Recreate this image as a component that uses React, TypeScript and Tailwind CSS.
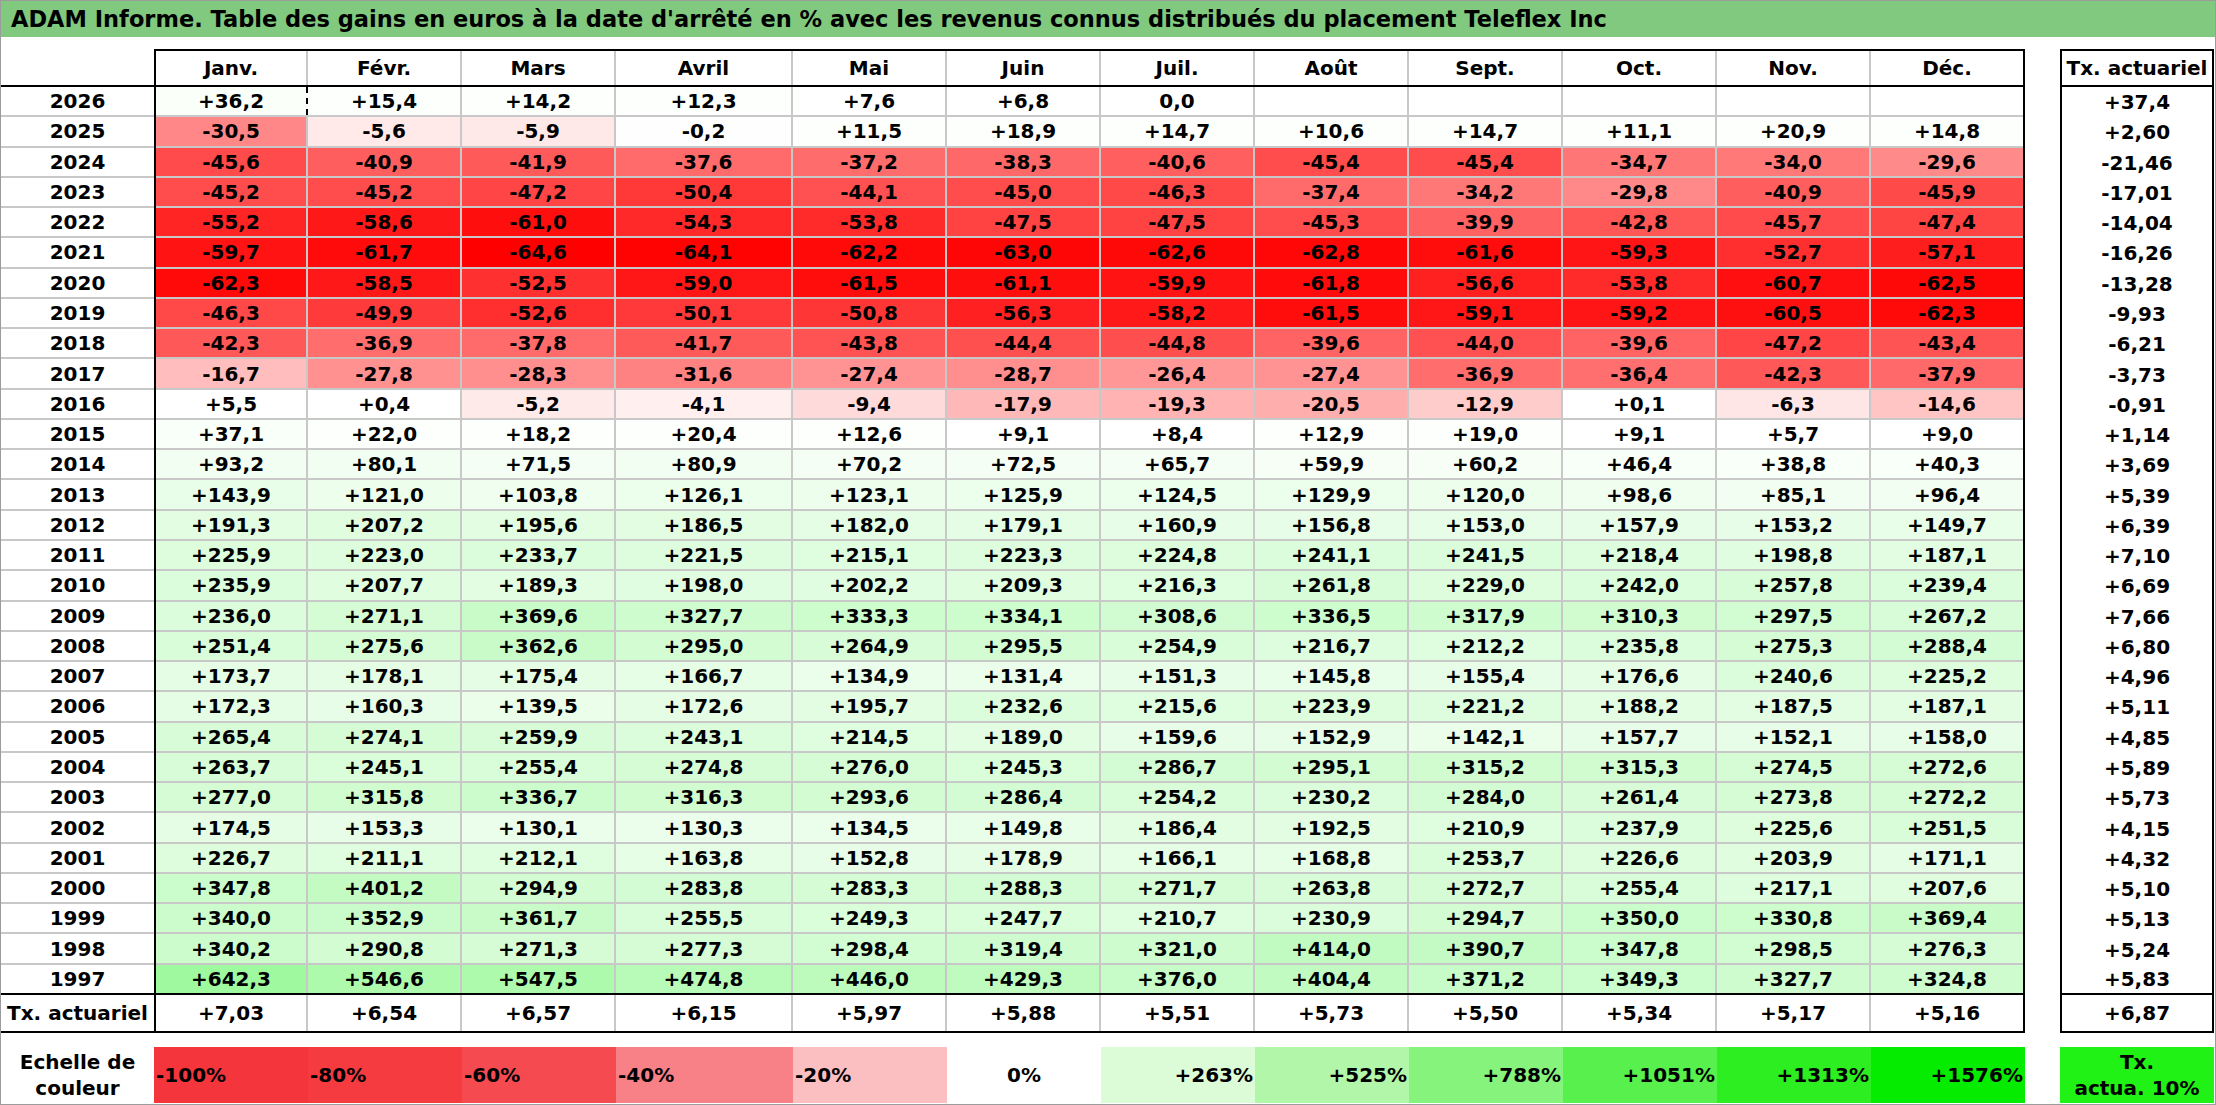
import React from "react";

const months = ["Janv.", "Févr.", "Mars", "Avril", "Mai", "Juin", "Juil.", "Août", "Sept.", "Oct.", "Nov.", "Déc."];

const rows: [string, string, string][] = [
  ["2026", "+36,2 +15,4 +14,2 +12,3 +7,6 +6,8 0,0 _ _ _ _ _", "+37,4"],
  ["2025", "-30,5 -5,6 -5,9 -0,2 +11,5 +18,9 +14,7 +10,6 +14,7 +11,1 +20,9 +14,8", "+2,60"],
  ["2024", "-45,6 -40,9 -41,9 -37,6 -37,2 -38,3 -40,6 -45,4 -45,4 -34,7 -34,0 -29,6", "-21,46"],
  ["2023", "-45,2 -45,2 -47,2 -50,4 -44,1 -45,0 -46,3 -37,4 -34,2 -29,8 -40,9 -45,9", "-17,01"],
  ["2022", "-55,2 -58,6 -61,0 -54,3 -53,8 -47,5 -47,5 -45,3 -39,9 -42,8 -45,7 -47,4", "-14,04"],
  ["2021", "-59,7 -61,7 -64,6 -64,1 -62,2 -63,0 -62,6 -62,8 -61,6 -59,3 -52,7 -57,1", "-16,26"],
  ["2020", "-62,3 -58,5 -52,5 -59,0 -61,5 -61,1 -59,9 -61,8 -56,6 -53,8 -60,7 -62,5", "-13,28"],
  ["2019", "-46,3 -49,9 -52,6 -50,1 -50,8 -56,3 -58,2 -61,5 -59,1 -59,2 -60,5 -62,3", "-9,93"],
  ["2018", "-42,3 -36,9 -37,8 -41,7 -43,8 -44,4 -44,8 -39,6 -44,0 -39,6 -47,2 -43,4", "-6,21"],
  ["2017", "-16,7 -27,8 -28,3 -31,6 -27,4 -28,7 -26,4 -27,4 -36,9 -36,4 -42,3 -37,9", "-3,73"],
  ["2016", "+5,5 +0,4 -5,2 -4,1 -9,4 -17,9 -19,3 -20,5 -12,9 +0,1 -6,3 -14,6", "-0,91"],
  ["2015", "+37,1 +22,0 +18,2 +20,4 +12,6 +9,1 +8,4 +12,9 +19,0 +9,1 +5,7 +9,0", "+1,14"],
  ["2014", "+93,2 +80,1 +71,5 +80,9 +70,2 +72,5 +65,7 +59,9 +60,2 +46,4 +38,8 +40,3", "+3,69"],
  ["2013", "+143,9 +121,0 +103,8 +126,1 +123,1 +125,9 +124,5 +129,9 +120,0 +98,6 +85,1 +96,4", "+5,39"],
  ["2012", "+191,3 +207,2 +195,6 +186,5 +182,0 +179,1 +160,9 +156,8 +153,0 +157,9 +153,2 +149,7", "+6,39"],
  ["2011", "+225,9 +223,0 +233,7 +221,5 +215,1 +223,3 +224,8 +241,1 +241,5 +218,4 +198,8 +187,1", "+7,10"],
  ["2010", "+235,9 +207,7 +189,3 +198,0 +202,2 +209,3 +216,3 +261,8 +229,0 +242,0 +257,8 +239,4", "+6,69"],
  ["2009", "+236,0 +271,1 +369,6 +327,7 +333,3 +334,1 +308,6 +336,5 +317,9 +310,3 +297,5 +267,2", "+7,66"],
  ["2008", "+251,4 +275,6 +362,6 +295,0 +264,9 +295,5 +254,9 +216,7 +212,2 +235,8 +275,3 +288,4", "+6,80"],
  ["2007", "+173,7 +178,1 +175,4 +166,7 +134,9 +131,4 +151,3 +145,8 +155,4 +176,6 +240,6 +225,2", "+4,96"],
  ["2006", "+172,3 +160,3 +139,5 +172,6 +195,7 +232,6 +215,6 +223,9 +221,2 +188,2 +187,5 +187,1", "+5,11"],
  ["2005", "+265,4 +274,1 +259,9 +243,1 +214,5 +189,0 +159,6 +152,9 +142,1 +157,7 +152,1 +158,0", "+4,85"],
  ["2004", "+263,7 +245,1 +255,4 +274,8 +276,0 +245,3 +286,7 +295,1 +315,2 +315,3 +274,5 +272,6", "+5,89"],
  ["2003", "+277,0 +315,8 +336,7 +316,3 +293,6 +286,4 +254,2 +230,2 +284,0 +261,4 +273,8 +272,2", "+5,73"],
  ["2002", "+174,5 +153,3 +130,1 +130,3 +134,5 +149,8 +186,4 +192,5 +210,9 +237,9 +225,6 +251,5", "+4,15"],
  ["2001", "+226,7 +211,1 +212,1 +163,8 +152,8 +178,9 +166,1 +168,8 +253,7 +226,6 +203,9 +171,1", "+4,32"],
  ["2000", "+347,8 +401,2 +294,9 +283,8 +283,3 +288,3 +271,7 +263,8 +272,7 +255,4 +217,1 +207,6", "+5,10"],
  ["1999", "+340,0 +352,9 +361,7 +255,5 +249,3 +247,7 +210,7 +230,9 +294,7 +350,0 +330,8 +369,4", "+5,13"],
  ["1998", "+340,2 +290,8 +271,3 +277,3 +298,4 +319,4 +321,0 +414,0 +390,7 +347,8 +298,5 +276,3", "+5,24"],
  ["1997", "+642,3 +546,6 +547,5 +474,8 +446,0 +429,3 +376,0 +404,4 +371,2 +349,3 +327,7 +324,8", "+5,83"],
];

const txRow = ["+7,03", "+6,54", "+6,57", "+6,15", "+5,97", "+5,88", "+5,51", "+5,73", "+5,50", "+5,34", "+5,17", "+5,16"];

const legend: { label: string; bg: string; align: string }[] = [
  { label: "-100%", bg: "bg-[#f4353b]", align: "justify-start pl-[2px]" },
  { label: "-80%", bg: "bg-[#f53a40]", align: "justify-start pl-[2px]" },
  { label: "-60%", bg: "bg-[#f54b50]", align: "justify-start pl-[2px]" },
  { label: "-40%", bg: "bg-[#f78186]", align: "justify-start pl-[2px]" },
  { label: "-20%", bg: "bg-[#fbbfc2]", align: "justify-start pl-[2px]" },
  { label: "0%", bg: "bg-white", align: "justify-center" },
  { label: "+263%", bg: "bg-[#dcfbd7]", align: "justify-end pr-[2px]" },
  { label: "+525%", bg: "bg-[#b2f6aa]", align: "justify-end pr-[2px]" },
  { label: "+788%", bg: "bg-[#86f37c]", align: "justify-end pr-[2px]" },
  { label: "+1051%", bg: "bg-[#58f04d]", align: "justify-end pr-[2px]" },
  { label: "+1313%", bg: "bg-[#2cee20]", align: "justify-end pr-[2px]" },
  { label: "+1576%", bg: "bg-[#06ec00]", align: "justify-end pr-[2px]" },
];

const legendW = ["w-[154px]", "w-[154px]", "w-[154px]", "w-[177px]", "w-[154px]", "w-[154px]", "w-[154px]", "w-[154px]", "w-[154px]", "w-[154px]", "w-[154px]", "w-[154px]"];

const grid = "grid grid-cols-[152px_154px_154px_177px_154px_154px_154px_154px_154px_154px_154px_152px]";

// colour scale: white -> red at the lowest value, white -> green towards +1576 %
function cellBg(s: string) {
  if (!s) return undefined;
  const v = parseFloat(s.replace(",", "."));
  if (v < 0) {
    const t = Math.min(1, -v / 64.6);
    const g = Math.round(255 * (1 - t));
    return `rgb(255,${g},${g})`;
  }
  const t = Math.min(1, v / 1700);
  const rb = Math.round(255 - 255 * t);
  return `rgb(${rb},${Math.round(255 - 17 * t)},${rb})`;
}

export default function App() {
  const last = rows.length - 1;
  return (
    <div className="w-[2216px] h-[1105px] bg-white border border-[#9c9c9c] font-['DejaVu_Sans',sans-serif] font-bold text-black overflow-hidden">
      <div className="h-[36px] bg-[#80c97e] flex items-center pl-[10px] text-[22.5px] leading-none whitespace-nowrap">
        ADAM Informe. Table des gains en euros à la date d'arrêté en % avec les revenus connus distribués du placement Teleflex Inc
      </div>

      <div className="mt-[12px] flex items-start text-[20px] leading-none">
        {/* years */}
        <div className="w-[153px] shrink-0">
          <div className="h-[38px] border-b-2 border-black" />
          {rows.map(([year], i) => (
            <div
              key={year}
              className={`h-[30.27px] border-b-2 flex items-center justify-center ${i === last ? "border-black" : "border-[#c8c8c8]"}`}
            >
              {year}
            </div>
          ))}
          <div className="h-[38px] border-b-2 border-black flex items-center justify-center whitespace-nowrap">
            Tx. actuariel
          </div>
        </div>

        {/* months */}
        <div className="w-[1871px] shrink-0 border-2 border-black">
          <div className={`${grid} h-[36px] border-b-2 border-black`}>
            {months.map((m, j) => (
              <div key={m} className={`flex items-center justify-center ${j < 11 ? "border-r-2 border-[#c8c8c8]" : ""}`}>
                {m}
              </div>
            ))}
          </div>
          {rows.map(([year, vals], i) => (
            <div
              key={year}
              className={`${grid} h-[30.27px] border-b-2 ${i === last ? "border-black" : "border-[#c8c8c8]"}`}
            >
              {vals.split(" ").map((raw, j) => {
                const v = raw === "_" ? "" : raw;
                const dashed = i === 0 && j === 0;
                return (
                  <div
                    key={j}
                    style={{ backgroundColor: cellBg(v) }}
                    className={`flex items-center justify-center ${
                      j < 11 ? (dashed ? "border-r-2 border-dashed border-black" : "border-r-2 border-[#c8c8c8]") : ""
                    }`}
                  >
                    {v}
                  </div>
                );
              })}
            </div>
          ))}
          <div className={`${grid} h-[36px]`}>
            {txRow.map((v, j) => (
              <div key={j} className={`flex items-center justify-center ${j < 11 ? "border-r-2 border-[#c8c8c8]" : ""}`}>
                {v}
              </div>
            ))}
          </div>
        </div>

        <div className="w-[35px] shrink-0" />

        {/* Tx. actuariel */}
        <div className="w-[154px] shrink-0 border-2 border-black">
          <div className="h-[36px] border-b-2 border-black flex items-center justify-center whitespace-nowrap">
            Tx. actuariel
          </div>
          {rows.map(([year, , tx], i) => (
            <div
              key={year}
              className={`h-[30.27px] flex items-center justify-center ${i === last ? "border-b-2 border-black" : ""}`}
            >
              {tx}
            </div>
          ))}
          <div className="h-[36px] flex items-center justify-center">+6,87</div>
        </div>
      </div>

      {/* legend */}
      <div className="mt-[14px] flex h-[56px] text-[20px]">
        <div className="w-[153px] shrink-0 flex flex-col items-center justify-center leading-[26px]">
          <span>Echelle de</span>
          <span>couleur</span>
        </div>
        {legend.map((c, j) => (
          <div key={c.label} className={`${legendW[j]} shrink-0 flex items-center ${c.align} ${c.bg} leading-none`}>
            {c.label}
          </div>
        ))}
        <div className="w-[35px] shrink-0" />
        <div className="w-[154px] shrink-0 bg-[#1ff214] flex flex-col items-center justify-center leading-[26px]">
          <span>Tx.</span>
          <span>actua. 10%</span>
        </div>
      </div>
    </div>
  );
}
